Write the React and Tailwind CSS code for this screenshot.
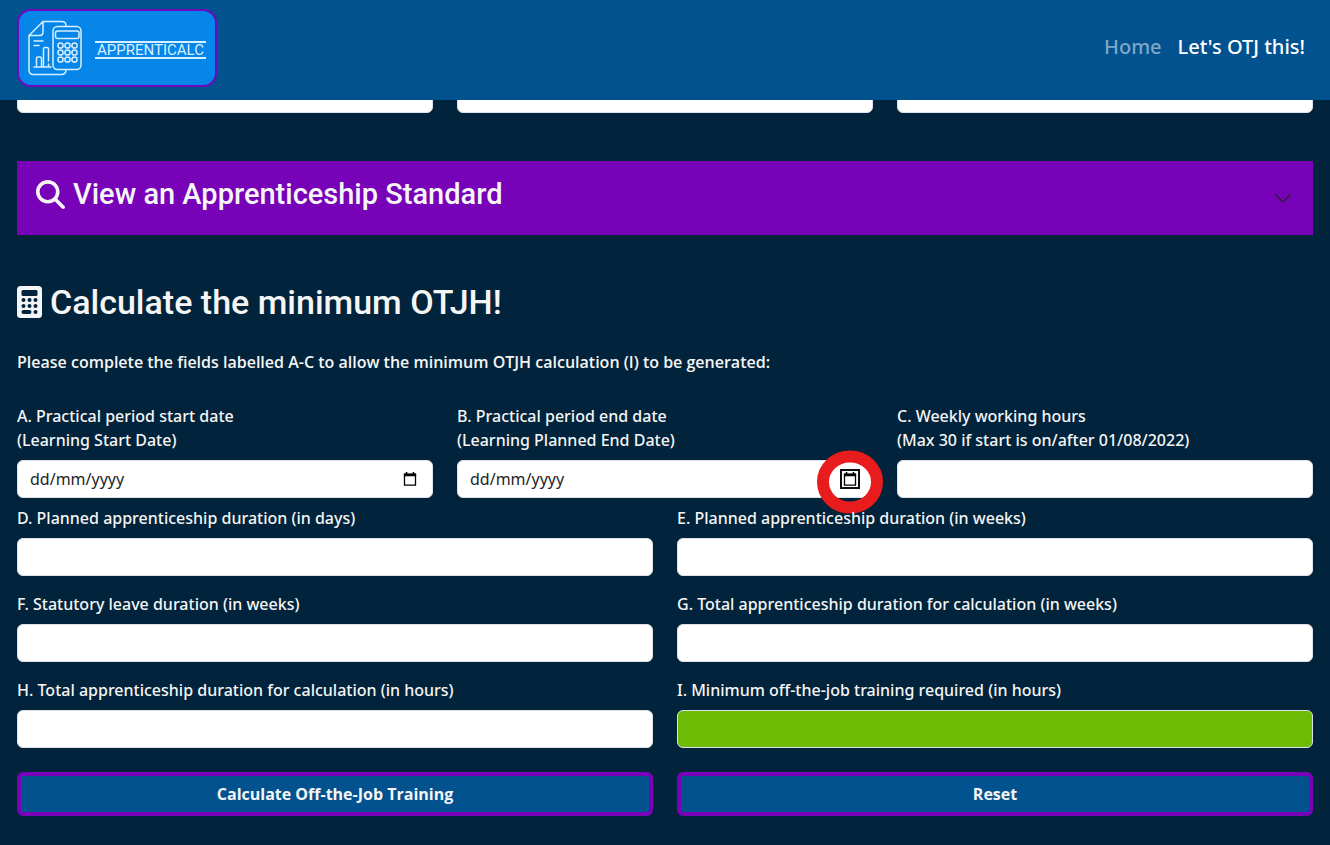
import React from "react";
import { FaMagnifyingGlass } from "react-icons/fa6";

const field =
  "block h-[38px] w-full rounded-md border border-[#dee2e6] bg-white px-3 text-base font-normal text-[#212529] placeholder:text-[#212529] placeholder:opacity-100";

function Field({ id, label, tone = "" }) {
  return (
    <div>
      <label htmlFor={id} className="relative z-10 mb-2 block">
        {label}
      </label>
      <input id={id} type="text" className={`${field} ${tone}`} />
    </div>
  );
}

function CalendarIcon() {
  return (
    <svg viewBox="0 0 14 14" className="size-[14px]" fill="none" aria-hidden="true">
      <path d="M1.500 2.500h11v10.700h-11z" stroke="#000" strokeWidth="1.300" />
      <path d="M.9 1.500h12.200v2.800H.9zM2.800 0h1.500v2H2.800zM9.700 0h1.500v2H9.700z" fill="#000" />
    </svg>
  );
}

function CalculatorIcon() {
  return (
    <svg viewBox="0 0 25 32" className="h-8 w-[25px]" aria-hidden="true">
      <rect width="25" height="32" rx="3.500" fill="currentColor" />
      <g fill="#01233b">
        <rect x="4.500" y="4" width="16" height="6" rx="1.500" />
        {[14, 20].map((y) =>
          [6.5, 12.5, 18.5].map((x) => <circle key={`${x}-${y}`} cx={x} cy={y} r="2" />)
        )}
        <rect x="4.500" y="24" width="10" height="4" rx="2" />
        <circle cx="18.500" cy="26" r="2" />
      </g>
    </svg>
  );
}

function DateField({ id, title, note, focused }) {
  return (
    <div>
      <label htmlFor={id} className="mb-2 block">
        {title}
        <br />
        {note}
      </label>
      <div className="relative">
        <input id={id} type="text" placeholder="dd/mm/yyyy" className={field} />
        <button
          type="button"
          aria-label="Open calendar"
          className={`absolute right-[13px] top-[9px] z-10 flex size-5 items-center justify-center ${
            focused ? "border-2 border-[#101010]" : ""
          }`}
        >
          <CalendarIcon />
        </button>
        {focused && (
          <svg
            viewBox="0 0 68 64"
            className="pointer-events-none absolute -right-[11px] -top-[10px] h-16 w-[68px]"
            fill="none"
            aria-hidden="true"
          >
            <ellipse cx="34" cy="32" rx="27" ry="25.500" stroke="#e81c1c" strokeWidth="12" />
          </svg>
        )}
      </div>
    </div>
  );
}

function Logo() {
  return (
    <a
      href="#home"
      aria-label="Apprenticalc"
      className="flex h-[78px] w-[200px] items-center rounded-[14px] border-2 border-[#6f08bd] bg-[#0586e8] pl-2 text-[#d8efff]"
    >
      <svg viewBox="0 0 56 58" className="h-[58px] w-14 shrink-0" fill="none" stroke="currentColor" strokeWidth="1.5" strokeLinecap="round" aria-hidden="true">
        <path d="M39 6.500C39 3.500 37 2.500 34.500 2.500H16L2 16.500V51c0 3 2 4.500 4.500 4.500H34c3 0 5-1.500 5-4.500M16 2.500V13c0 2.500-1.500 3.500-3.500 3.500H2" />
        <path d="M7 22h9M7 26.500h5M7 48h17M9.500 48V39.500c0-1 .5-1.500 1.500-1.500h2c1 0 1.500.5 1.500 1.500V48M16.500 48V30c0-1 .5-1.500 1.500-1.500h2c1 0 1.500.5 1.500 1.500v12M21.500 45v3" />
        <rect x="26" y="7.500" width="28" height="43" rx="4.500" />
        <rect x="28.500" y="12" width="23.500" height="7.500" rx="2" />
        {[26.5, 33.5, 40.5].map((y) =>
          [33.5, 40.5, 47.5].map((x) => <circle key={`${x}-${y}`} cx={x} cy={y} r="2.600" />)
        )}
      </svg>
      <span className="ml-3 mt-1 w-[111px] border-y-2 border-current text-center font-[Roboto] text-[15px] font-normal leading-[14px]">
        APPRENTICALC
      </span>
    </a>
  );
}

export default function App() {
  return (
    <div className="min-h-screen bg-[#01233b] font-['Noto_Sans','Open_Sans',sans-serif] text-base font-medium text-[#f5f5f5]">
      <header className="sticky top-0 z-20 flex h-[100px] items-start justify-between bg-[#02528f] px-[17px] pt-[9px]">
        <Logo />
        <nav className="mr-2 flex gap-4 pt-6 text-xl leading-7">
          <a href="#home" className="text-[#7fa8c8]">Home</a>
          <a href="#otj" className="text-white">Let's OTJ this!</a>
        </nav>
      </header>

      <main className="px-[17px] pb-[29px]">
        <div className="-mt-[25px] grid grid-cols-3 gap-6">
          <input aria-label="Standard" type="text" className={field} />
          <input aria-label="Level" type="text" className={field} />
          <input aria-label="Duration" type="text" className={field} />
        </div>

        <button
          type="button"
          className="mt-12 flex h-[74px] w-full items-center justify-between bg-[#7702b8] pl-[19px] pr-5 text-left"
        >
          <span className="mb-2 flex items-center gap-2 font-[Roboto] text-[29px] leading-9">
            <FaMagnifyingGlass className="size-[29px]" />
            View an Apprenticeship Standard
          </span>
          <svg viewBox="0 0 20 20" className="size-5" fill="none" stroke="#212529" strokeWidth="1.300" strokeLinecap="round" strokeLinejoin="round" aria-hidden="true">
            <path d="M2.500 6.500l7.500 7.500 7.500-7.500" />
          </svg>
        </button>

        <h2 className="mt-[47px] flex items-center gap-2 font-[Roboto] text-[34px] font-medium leading-10">
          <CalculatorIcon />
          Calculate the minimum OTJH!
        </h2>

        <p className="mt-7 font-['Open_Sans'] font-semibold leading-6">
          Please complete the fields labelled A-C to allow the minimum OTJH calculation (I) to be generated:
        </p>

        <form className="mt-[30px]">
          <div className="mb-2 grid grid-cols-3 gap-6">
            <DateField id="a" title="A. Practical period start date" note="(Learning Start Date)" />
            <DateField id="b" title="B. Practical period end date" note="(Learning Planned End Date)" focused />
            <Field
              id="c"
              label={
                <>
                  C. Weekly working hours
                  <br />
                  (Max 30 if start is on/after 01/08/2022)
                </>
              }
            />
          </div>
          <div className="grid grid-cols-2 gap-x-6 gap-y-4">
            <Field id="d" label="D. Planned apprenticeship duration (in days)" />
            <Field id="e" label="E. Planned apprenticeship duration (in weeks)" />
            <Field id="f" label="F. Statutory leave duration (in weeks)" />
            <Field id="g" label="G. Total apprenticeship duration for calculation (in weeks)" />
            <Field id="h" label="H. Total apprenticeship duration for calculation (in hours)" />
            <Field id="i" label="I. Minimum off-the-job training required (in hours)" tone="bg-[#6cbc05]!" />
          </div>
          <div className="mt-6 grid grid-cols-2 gap-6 font-['Open_Sans'] font-bold">
            <button type="button" className="h-11 rounded-md border-4 border-[#7702b8] bg-[#02528f]">
              Calculate Off-the-Job Training
            </button>
            <button type="reset" className="h-11 rounded-md border-4 border-[#7702b8] bg-[#02528f]">
              Reset
            </button>
          </div>
        </form>
      </main>
    </div>
  );
}
